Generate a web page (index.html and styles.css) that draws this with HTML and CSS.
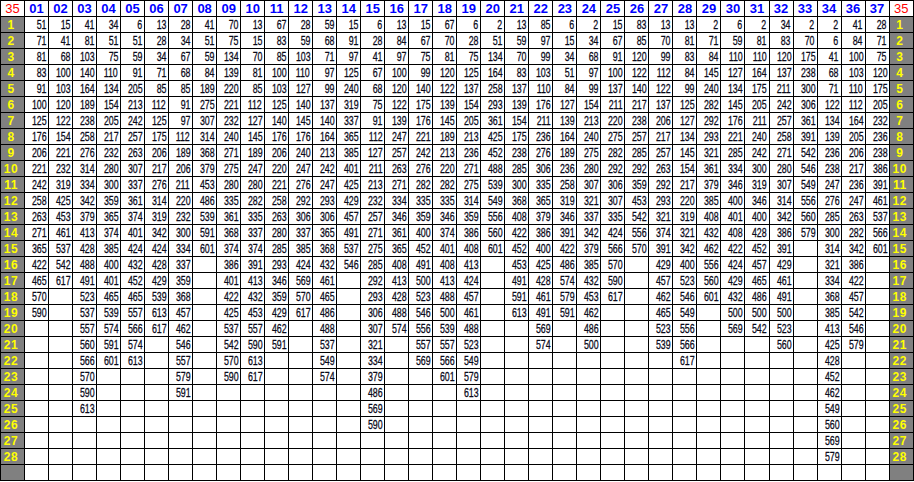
FILE: index.html
```html
<!DOCTYPE html>
<html>
<head>
<meta charset="utf-8">
<title>Sheet</title>
<link rel="stylesheet" href="styles.css">
</head>
<body>
<table class="sheet">
<tr><th class="corner">35</th><th>01</th><th>02</th><th>03</th><th>04</th><th>05</th><th>06</th><th>07</th><th>08</th><th>09</th><th>10</th><th>11</th><th>12</th><th>13</th><th>14</th><th>15</th><th>16</th><th>17</th><th>18</th><th>19</th><th>20</th><th>21</th><th>22</th><th>23</th><th>24</th><th>25</th><th>26</th><th>27</th><th>28</th><th>29</th><th>30</th><th>31</th><th>32</th><th>33</th><th>34</th><th>36</th><th>37</th><th class="corner">35</th></tr>
<tr><td class="lab">1</td><td><span>51</span></td><td><span>15</span></td><td><span>41</span></td><td><span>34</span></td><td><span>6</span></td><td><span>13</span></td><td><span>28</span></td><td><span>41</span></td><td><span>70</span></td><td><span>13</span></td><td><span>67</span></td><td><span>28</span></td><td><span>59</span></td><td><span>15</span></td><td><span>6</span></td><td><span>13</span></td><td><span>15</span></td><td><span>67</span></td><td><span>6</span></td><td><span>2</span></td><td><span>13</span></td><td><span>85</span></td><td><span>6</span></td><td><span>2</span></td><td><span>15</span></td><td><span>83</span></td><td><span>13</span></td><td><span>13</span></td><td><span>2</span></td><td><span>6</span></td><td><span>2</span></td><td><span>34</span></td><td><span>2</span></td><td><span>2</span></td><td><span>41</span></td><td><span>28</span></td><td class="lab">1</td></tr>
<tr><td class="lab">2</td><td><span>71</span></td><td><span>41</span></td><td><span>81</span></td><td><span>51</span></td><td><span>51</span></td><td><span>28</span></td><td><span>34</span></td><td><span>51</span></td><td><span>75</span></td><td><span>15</span></td><td><span>83</span></td><td><span>59</span></td><td><span>68</span></td><td><span>91</span></td><td><span>28</span></td><td><span>84</span></td><td><span>67</span></td><td><span>70</span></td><td><span>28</span></td><td><span>51</span></td><td><span>59</span></td><td><span>97</span></td><td><span>15</span></td><td><span>34</span></td><td><span>67</span></td><td><span>85</span></td><td><span>70</span></td><td><span>81</span></td><td><span>71</span></td><td><span>59</span></td><td><span>81</span></td><td><span>83</span></td><td><span>70</span></td><td><span>6</span></td><td><span>84</span></td><td><span>71</span></td><td class="lab">2</td></tr>
<tr><td class="lab">3</td><td><span>81</span></td><td><span>68</span></td><td><span>103</span></td><td><span>75</span></td><td><span>59</span></td><td><span>34</span></td><td><span>67</span></td><td><span>59</span></td><td><span>134</span></td><td><span>70</span></td><td><span>85</span></td><td><span>103</span></td><td><span>71</span></td><td><span>97</span></td><td><span>41</span></td><td><span>97</span></td><td><span>75</span></td><td><span>81</span></td><td><span>75</span></td><td><span>134</span></td><td><span>70</span></td><td><span>99</span></td><td><span>34</span></td><td><span>68</span></td><td><span>91</span></td><td><span>120</span></td><td><span>99</span></td><td><span>83</span></td><td><span>84</span></td><td><span>110</span></td><td><span>110</span></td><td><span>120</span></td><td><span>175</span></td><td><span>41</span></td><td><span>100</span></td><td><span>75</span></td><td class="lab">3</td></tr>
<tr><td class="lab">4</td><td><span>83</span></td><td><span>100</span></td><td><span>140</span></td><td><span>110</span></td><td><span>91</span></td><td><span>71</span></td><td><span>68</span></td><td><span>84</span></td><td><span>139</span></td><td><span>81</span></td><td><span>100</span></td><td><span>110</span></td><td><span>97</span></td><td><span>125</span></td><td><span>67</span></td><td><span>100</span></td><td><span>99</span></td><td><span>120</span></td><td><span>125</span></td><td><span>164</span></td><td><span>83</span></td><td><span>103</span></td><td><span>51</span></td><td><span>97</span></td><td><span>100</span></td><td><span>122</span></td><td><span>112</span></td><td><span>84</span></td><td><span>145</span></td><td><span>127</span></td><td><span>164</span></td><td><span>137</span></td><td><span>238</span></td><td><span>68</span></td><td><span>103</span></td><td><span>120</span></td><td class="lab">4</td></tr>
<tr><td class="lab">5</td><td><span>91</span></td><td><span>103</span></td><td><span>164</span></td><td><span>134</span></td><td><span>205</span></td><td><span>85</span></td><td><span>85</span></td><td><span>189</span></td><td><span>220</span></td><td><span>85</span></td><td><span>103</span></td><td><span>127</span></td><td><span>99</span></td><td><span>240</span></td><td><span>68</span></td><td><span>120</span></td><td><span>140</span></td><td><span>122</span></td><td><span>137</span></td><td><span>258</span></td><td><span>137</span></td><td><span>110</span></td><td><span>84</span></td><td><span>99</span></td><td><span>137</span></td><td><span>140</span></td><td><span>122</span></td><td><span>99</span></td><td><span>240</span></td><td><span>134</span></td><td><span>175</span></td><td><span>211</span></td><td><span>300</span></td><td><span>71</span></td><td><span>110</span></td><td><span>175</span></td><td class="lab">5</td></tr>
<tr><td class="lab">6</td><td><span>100</span></td><td><span>120</span></td><td><span>189</span></td><td><span>154</span></td><td><span>213</span></td><td><span>112</span></td><td><span>91</span></td><td><span>275</span></td><td><span>221</span></td><td><span>112</span></td><td><span>125</span></td><td><span>140</span></td><td><span>137</span></td><td><span>319</span></td><td><span>75</span></td><td><span>122</span></td><td><span>175</span></td><td><span>139</span></td><td><span>154</span></td><td><span>293</span></td><td><span>139</span></td><td><span>176</span></td><td><span>127</span></td><td><span>154</span></td><td><span>211</span></td><td><span>217</span></td><td><span>137</span></td><td><span>125</span></td><td><span>282</span></td><td><span>145</span></td><td><span>205</span></td><td><span>242</span></td><td><span>306</span></td><td><span>122</span></td><td><span>112</span></td><td><span>205</span></td><td class="lab">6</td></tr>
<tr><td class="lab">7</td><td><span>125</span></td><td><span>122</span></td><td><span>238</span></td><td><span>205</span></td><td><span>242</span></td><td><span>125</span></td><td><span>97</span></td><td><span>307</span></td><td><span>232</span></td><td><span>127</span></td><td><span>140</span></td><td><span>145</span></td><td><span>140</span></td><td><span>337</span></td><td><span>91</span></td><td><span>139</span></td><td><span>176</span></td><td><span>145</span></td><td><span>205</span></td><td><span>361</span></td><td><span>154</span></td><td><span>211</span></td><td><span>139</span></td><td><span>213</span></td><td><span>220</span></td><td><span>238</span></td><td><span>206</span></td><td><span>127</span></td><td><span>292</span></td><td><span>176</span></td><td><span>211</span></td><td><span>257</span></td><td><span>361</span></td><td><span>134</span></td><td><span>164</span></td><td><span>232</span></td><td class="lab">7</td></tr>
<tr><td class="lab">8</td><td><span>176</span></td><td><span>154</span></td><td><span>258</span></td><td><span>217</span></td><td><span>257</span></td><td><span>175</span></td><td><span>112</span></td><td><span>314</span></td><td><span>240</span></td><td><span>145</span></td><td><span>176</span></td><td><span>176</span></td><td><span>164</span></td><td><span>365</span></td><td><span>112</span></td><td><span>247</span></td><td><span>221</span></td><td><span>189</span></td><td><span>213</span></td><td><span>425</span></td><td><span>175</span></td><td><span>236</span></td><td><span>164</span></td><td><span>240</span></td><td><span>275</span></td><td><span>257</span></td><td><span>217</span></td><td><span>134</span></td><td><span>293</span></td><td><span>221</span></td><td><span>240</span></td><td><span>258</span></td><td><span>391</span></td><td><span>139</span></td><td><span>205</span></td><td><span>236</span></td><td class="lab">8</td></tr>
<tr><td class="lab">9</td><td><span>206</span></td><td><span>221</span></td><td><span>276</span></td><td><span>232</span></td><td><span>263</span></td><td><span>206</span></td><td><span>189</span></td><td><span>368</span></td><td><span>271</span></td><td><span>189</span></td><td><span>206</span></td><td><span>240</span></td><td><span>213</span></td><td><span>385</span></td><td><span>127</span></td><td><span>257</span></td><td><span>242</span></td><td><span>213</span></td><td><span>236</span></td><td><span>452</span></td><td><span>238</span></td><td><span>276</span></td><td><span>189</span></td><td><span>275</span></td><td><span>282</span></td><td><span>285</span></td><td><span>257</span></td><td><span>145</span></td><td><span>321</span></td><td><span>285</span></td><td><span>242</span></td><td><span>271</span></td><td><span>542</span></td><td><span>236</span></td><td><span>206</span></td><td><span>238</span></td><td class="lab">9</td></tr>
<tr><td class="lab">10</td><td><span>221</span></td><td><span>232</span></td><td><span>314</span></td><td><span>280</span></td><td><span>307</span></td><td><span>217</span></td><td><span>206</span></td><td><span>379</span></td><td><span>275</span></td><td><span>247</span></td><td><span>220</span></td><td><span>247</span></td><td><span>242</span></td><td><span>401</span></td><td><span>211</span></td><td><span>263</span></td><td><span>276</span></td><td><span>220</span></td><td><span>271</span></td><td><span>488</span></td><td><span>285</span></td><td><span>306</span></td><td><span>236</span></td><td><span>280</span></td><td><span>292</span></td><td><span>292</span></td><td><span>263</span></td><td><span>154</span></td><td><span>361</span></td><td><span>334</span></td><td><span>300</span></td><td><span>280</span></td><td><span>546</span></td><td><span>238</span></td><td><span>217</span></td><td><span>386</span></td><td class="lab">10</td></tr>
<tr><td class="lab">11</td><td><span>242</span></td><td><span>319</span></td><td><span>334</span></td><td><span>300</span></td><td><span>337</span></td><td><span>276</span></td><td><span>211</span></td><td><span>453</span></td><td><span>280</span></td><td><span>280</span></td><td><span>221</span></td><td><span>276</span></td><td><span>247</span></td><td><span>425</span></td><td><span>213</span></td><td><span>271</span></td><td><span>282</span></td><td><span>282</span></td><td><span>275</span></td><td><span>539</span></td><td><span>300</span></td><td><span>335</span></td><td><span>258</span></td><td><span>307</span></td><td><span>306</span></td><td><span>359</span></td><td><span>292</span></td><td><span>217</span></td><td><span>379</span></td><td><span>346</span></td><td><span>319</span></td><td><span>307</span></td><td><span>549</span></td><td><span>247</span></td><td><span>236</span></td><td><span>391</span></td><td class="lab">11</td></tr>
<tr><td class="lab">12</td><td><span>258</span></td><td><span>425</span></td><td><span>342</span></td><td><span>359</span></td><td><span>361</span></td><td><span>314</span></td><td><span>220</span></td><td><span>486</span></td><td><span>335</span></td><td><span>282</span></td><td><span>258</span></td><td><span>292</span></td><td><span>293</span></td><td><span>429</span></td><td><span>232</span></td><td><span>334</span></td><td><span>335</span></td><td><span>335</span></td><td><span>314</span></td><td><span>549</span></td><td><span>368</span></td><td><span>365</span></td><td><span>319</span></td><td><span>321</span></td><td><span>307</span></td><td><span>453</span></td><td><span>293</span></td><td><span>220</span></td><td><span>385</span></td><td><span>400</span></td><td><span>346</span></td><td><span>314</span></td><td><span>556</span></td><td><span>276</span></td><td><span>247</span></td><td><span>461</span></td><td class="lab">12</td></tr>
<tr><td class="lab">13</td><td><span>263</span></td><td><span>453</span></td><td><span>379</span></td><td><span>365</span></td><td><span>374</span></td><td><span>319</span></td><td><span>232</span></td><td><span>539</span></td><td><span>361</span></td><td><span>335</span></td><td><span>263</span></td><td><span>306</span></td><td><span>306</span></td><td><span>457</span></td><td><span>257</span></td><td><span>346</span></td><td><span>359</span></td><td><span>346</span></td><td><span>359</span></td><td><span>556</span></td><td><span>408</span></td><td><span>379</span></td><td><span>346</span></td><td><span>337</span></td><td><span>335</span></td><td><span>542</span></td><td><span>321</span></td><td><span>319</span></td><td><span>408</span></td><td><span>401</span></td><td><span>400</span></td><td><span>342</span></td><td><span>560</span></td><td><span>285</span></td><td><span>263</span></td><td><span>537</span></td><td class="lab">13</td></tr>
<tr><td class="lab">14</td><td><span>271</span></td><td><span>461</span></td><td><span>413</span></td><td><span>374</span></td><td><span>401</span></td><td><span>342</span></td><td><span>300</span></td><td><span>591</span></td><td><span>368</span></td><td><span>337</span></td><td><span>280</span></td><td><span>337</span></td><td><span>365</span></td><td><span>491</span></td><td><span>271</span></td><td><span>361</span></td><td><span>400</span></td><td><span>374</span></td><td><span>386</span></td><td><span>560</span></td><td><span>422</span></td><td><span>386</span></td><td><span>391</span></td><td><span>342</span></td><td><span>424</span></td><td><span>556</span></td><td><span>374</span></td><td><span>321</span></td><td><span>432</span></td><td><span>408</span></td><td><span>428</span></td><td><span>386</span></td><td><span>579</span></td><td><span>300</span></td><td><span>282</span></td><td><span>566</span></td><td class="lab">14</td></tr>
<tr><td class="lab">15</td><td><span>365</span></td><td><span>537</span></td><td><span>428</span></td><td><span>385</span></td><td><span>424</span></td><td><span>424</span></td><td><span>334</span></td><td><span>601</span></td><td><span>374</span></td><td><span>374</span></td><td><span>285</span></td><td><span>385</span></td><td><span>368</span></td><td><span>537</span></td><td><span>275</span></td><td><span>365</span></td><td><span>452</span></td><td><span>401</span></td><td><span>408</span></td><td><span>601</span></td><td><span>452</span></td><td><span>400</span></td><td><span>422</span></td><td><span>379</span></td><td><span>566</span></td><td><span>570</span></td><td><span>391</span></td><td><span>342</span></td><td><span>462</span></td><td><span>422</span></td><td><span>452</span></td><td><span>391</span></td><td></td><td><span>314</span></td><td><span>342</span></td><td><span>601</span></td><td class="lab">15</td></tr>
<tr><td class="lab">16</td><td><span>422</span></td><td><span>542</span></td><td><span>488</span></td><td><span>400</span></td><td><span>432</span></td><td><span>428</span></td><td><span>337</span></td><td></td><td><span>386</span></td><td><span>391</span></td><td><span>293</span></td><td><span>424</span></td><td><span>432</span></td><td><span>546</span></td><td><span>285</span></td><td><span>408</span></td><td><span>491</span></td><td><span>408</span></td><td><span>413</span></td><td></td><td><span>453</span></td><td><span>425</span></td><td><span>486</span></td><td><span>385</span></td><td><span>570</span></td><td></td><td><span>429</span></td><td><span>400</span></td><td><span>556</span></td><td><span>424</span></td><td><span>457</span></td><td><span>429</span></td><td></td><td><span>321</span></td><td><span>386</span></td><td></td><td class="lab">16</td></tr>
<tr><td class="lab">17</td><td><span>465</span></td><td><span>617</span></td><td><span>491</span></td><td><span>401</span></td><td><span>452</span></td><td><span>429</span></td><td><span>359</span></td><td></td><td><span>401</span></td><td><span>413</span></td><td><span>346</span></td><td><span>569</span></td><td><span>461</span></td><td></td><td><span>292</span></td><td><span>413</span></td><td><span>500</span></td><td><span>413</span></td><td><span>424</span></td><td></td><td><span>491</span></td><td><span>428</span></td><td><span>574</span></td><td><span>432</span></td><td><span>590</span></td><td></td><td><span>457</span></td><td><span>523</span></td><td><span>560</span></td><td><span>429</span></td><td><span>465</span></td><td><span>461</span></td><td></td><td><span>334</span></td><td><span>422</span></td><td></td><td class="lab">17</td></tr>
<tr><td class="lab">18</td><td><span>570</span></td><td></td><td><span>523</span></td><td><span>465</span></td><td><span>465</span></td><td><span>539</span></td><td><span>368</span></td><td></td><td><span>422</span></td><td><span>432</span></td><td><span>359</span></td><td><span>570</span></td><td><span>465</span></td><td></td><td><span>293</span></td><td><span>428</span></td><td><span>523</span></td><td><span>488</span></td><td><span>457</span></td><td></td><td><span>591</span></td><td><span>461</span></td><td><span>579</span></td><td><span>453</span></td><td><span>617</span></td><td></td><td><span>462</span></td><td><span>546</span></td><td><span>601</span></td><td><span>432</span></td><td><span>486</span></td><td><span>491</span></td><td></td><td><span>368</span></td><td><span>457</span></td><td></td><td class="lab">18</td></tr>
<tr><td class="lab">19</td><td><span>590</span></td><td></td><td><span>537</span></td><td><span>539</span></td><td><span>557</span></td><td><span>613</span></td><td><span>457</span></td><td></td><td><span>425</span></td><td><span>453</span></td><td><span>429</span></td><td><span>617</span></td><td><span>486</span></td><td></td><td><span>306</span></td><td><span>488</span></td><td><span>546</span></td><td><span>500</span></td><td><span>461</span></td><td></td><td><span>613</span></td><td><span>491</span></td><td><span>591</span></td><td><span>462</span></td><td></td><td></td><td><span>465</span></td><td><span>549</span></td><td></td><td><span>500</span></td><td><span>500</span></td><td><span>500</span></td><td></td><td><span>385</span></td><td><span>542</span></td><td></td><td class="lab">19</td></tr>
<tr><td class="lab">20</td><td></td><td></td><td><span>557</span></td><td><span>574</span></td><td><span>566</span></td><td><span>617</span></td><td><span>462</span></td><td></td><td><span>537</span></td><td><span>557</span></td><td><span>462</span></td><td></td><td><span>488</span></td><td></td><td><span>307</span></td><td><span>574</span></td><td><span>556</span></td><td><span>539</span></td><td><span>488</span></td><td></td><td></td><td><span>569</span></td><td></td><td><span>486</span></td><td></td><td></td><td><span>523</span></td><td><span>556</span></td><td></td><td><span>569</span></td><td><span>542</span></td><td><span>523</span></td><td></td><td><span>413</span></td><td><span>546</span></td><td></td><td class="lab">20</td></tr>
<tr><td class="lab">21</td><td></td><td></td><td><span>560</span></td><td><span>591</span></td><td><span>574</span></td><td></td><td><span>546</span></td><td></td><td><span>542</span></td><td><span>590</span></td><td><span>591</span></td><td></td><td><span>537</span></td><td></td><td><span>321</span></td><td></td><td><span>557</span></td><td><span>557</span></td><td><span>523</span></td><td></td><td></td><td><span>574</span></td><td></td><td><span>500</span></td><td></td><td></td><td><span>539</span></td><td><span>566</span></td><td></td><td></td><td></td><td><span>560</span></td><td></td><td><span>425</span></td><td><span>579</span></td><td></td><td class="lab">21</td></tr>
<tr><td class="lab">22</td><td></td><td></td><td><span>566</span></td><td><span>601</span></td><td><span>613</span></td><td></td><td><span>557</span></td><td></td><td><span>570</span></td><td><span>613</span></td><td></td><td></td><td><span>549</span></td><td></td><td><span>334</span></td><td></td><td><span>569</span></td><td><span>566</span></td><td><span>549</span></td><td></td><td></td><td></td><td></td><td></td><td></td><td></td><td></td><td><span>617</span></td><td></td><td></td><td></td><td></td><td></td><td><span>428</span></td><td></td><td></td><td class="lab">22</td></tr>
<tr><td class="lab">23</td><td></td><td></td><td><span>570</span></td><td></td><td></td><td></td><td><span>579</span></td><td></td><td><span>590</span></td><td><span>617</span></td><td></td><td></td><td><span>574</span></td><td></td><td><span>379</span></td><td></td><td></td><td><span>601</span></td><td><span>579</span></td><td></td><td></td><td></td><td></td><td></td><td></td><td></td><td></td><td></td><td></td><td></td><td></td><td></td><td></td><td><span>452</span></td><td></td><td></td><td class="lab">23</td></tr>
<tr><td class="lab">24</td><td></td><td></td><td><span>590</span></td><td></td><td></td><td></td><td><span>591</span></td><td></td><td></td><td></td><td></td><td></td><td></td><td></td><td><span>486</span></td><td></td><td></td><td></td><td><span>613</span></td><td></td><td></td><td></td><td></td><td></td><td></td><td></td><td></td><td></td><td></td><td></td><td></td><td></td><td></td><td><span>462</span></td><td></td><td></td><td class="lab">24</td></tr>
<tr><td class="lab">25</td><td></td><td></td><td><span>613</span></td><td></td><td></td><td></td><td></td><td></td><td></td><td></td><td></td><td></td><td></td><td></td><td><span>569</span></td><td></td><td></td><td></td><td></td><td></td><td></td><td></td><td></td><td></td><td></td><td></td><td></td><td></td><td></td><td></td><td></td><td></td><td></td><td><span>549</span></td><td></td><td></td><td class="lab">25</td></tr>
<tr><td class="lab">26</td><td></td><td></td><td></td><td></td><td></td><td></td><td></td><td></td><td></td><td></td><td></td><td></td><td></td><td></td><td><span>590</span></td><td></td><td></td><td></td><td></td><td></td><td></td><td></td><td></td><td></td><td></td><td></td><td></td><td></td><td></td><td></td><td></td><td></td><td></td><td><span>560</span></td><td></td><td></td><td class="lab">26</td></tr>
<tr><td class="lab">27</td><td></td><td></td><td></td><td></td><td></td><td></td><td></td><td></td><td></td><td></td><td></td><td></td><td></td><td></td><td></td><td></td><td></td><td></td><td></td><td></td><td></td><td></td><td></td><td></td><td></td><td></td><td></td><td></td><td></td><td></td><td></td><td></td><td></td><td><span>569</span></td><td></td><td></td><td class="lab">27</td></tr>
<tr><td class="lab">28</td><td></td><td></td><td></td><td></td><td></td><td></td><td></td><td></td><td></td><td></td><td></td><td></td><td></td><td></td><td></td><td></td><td></td><td></td><td></td><td></td><td></td><td></td><td></td><td></td><td></td><td></td><td></td><td></td><td></td><td></td><td></td><td></td><td></td><td><span>579</span></td><td></td><td></td><td class="lab">28</td></tr>
<tr><td class="lab"></td><td></td><td></td><td></td><td></td><td></td><td></td><td></td><td></td><td></td><td></td><td></td><td></td><td></td><td></td><td></td><td></td><td></td><td></td><td></td><td></td><td></td><td></td><td></td><td></td><td></td><td></td><td></td><td></td><td></td><td></td><td></td><td></td><td></td><td></td><td></td><td></td><td class="lab"></td></tr>
</table>
</body>
</html>
```

FILE: styles.css
```css
html, body {
  margin: 0;
  padding: 0;
  background: #ffffff;
}

.sheet {
  width: 914px;
  table-layout: fixed;
  border-collapse: collapse;
  font-family: "Liberation Sans", Arial, sans-serif;
  color: #000000;
}

.sheet tr {
  height: 16px;
}

.sheet th,
.sheet td {
  border: 1px solid #000000;
  padding: 0;
  line-height: 14px;
  white-space: nowrap;
  overflow: hidden;
}

.sheet th {
  font-size: 13px;
  font-weight: bold;
  color: #0000ff;
  text-align: center;
  background: #ffffff;
}

.sheet th.corner {
  color: #ff0000;
  font-weight: normal;
}

.sheet td {
  font-size: 13px;
  text-align: right;
  padding-right: 2px;
}

.sheet td span {
  display: inline-block;
  transform: scaleX(0.68);
  transform-origin: right center;
  color: #0a0a1a;
  -webkit-text-stroke: 0.3px #0a0a1a;
}

.sheet td.lab {
  background: #808080;
  color: #ffff00;
  font-size: 12px;
  font-weight: bold;
  text-align: center;
  padding-right: 3px;
  letter-spacing: 0.5px;
}
```
